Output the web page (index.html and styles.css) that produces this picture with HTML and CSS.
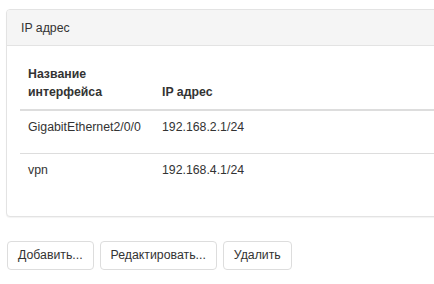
FILE: index.html
```html
<!DOCTYPE html>
<html lang="ru">
<head>
    <meta charset="UTF-8">
    <title>IP адрес</title>
    <link rel="stylesheet" href="styles.css">
</head>
<body>
    <div class="pagina">
        <div class="painel">
            <div class="painel-titulo">IP адрес</div>
            <div class="painel-corpo">
                <table class="tabela">
                    <thead>
                        <tr>
                            <th class="col-nome">Название<br>интерфейса</th>
                            <th>IP адрес</th>
                        </tr>
                    </thead>
                    <tbody>
                        <tr>
                            <td>GigabitEthernet2/0/0</td>
                            <td>192.168.2.1/24</td>
                        </tr>
                        <tr>
                            <td>vpn</td>
                            <td>192.168.4.1/24</td>
                        </tr>
                    </tbody>
                </table>
            </div>
        </div>

        <div class="botoes">
            <button class="botao">Добавить...</button>
            <button class="botao">Редактировать...</button>
            <button class="botao">Удалить</button>
        </div>
    </div>
</body>
</html>
```

FILE: styles.css
```css
* {
    box-sizing: border-box;
}

body {
    margin: 0;
    overflow: hidden;
    font-family: "Liberation Sans", Arial, sans-serif;
    font-size: 12.3px;
    line-height: 18px;
    color: #333;
    background: #fff;
}

.pagina {
    padding: 9px 0 0 6px;
}

.painel {
    width: 640px;
    border: 1px solid #e3e3e3;
    border-radius: 4px;
    box-shadow: 0 1px 1px rgba(0, 0, 0, .05);
    background: #fff;
}

.painel-titulo {
    background-color: #f5f5f5;
    border-bottom: 1px solid #e3e3e3;
    border-radius: 3px 3px 0 0;
    padding: 9px 14px 8px;
}

.painel-corpo {
    padding: 11px 13px 0;
}

.tabela {
    width: 100%;
    border-collapse: collapse;
    margin-bottom: 20px;
}

.tabela th {
    text-align: left;
    font-weight: bold;
    vertical-align: bottom;
    padding: 8px;
    border-bottom: 2px solid #ddd;
}

.tabela .col-nome {
    width: 134px;
}

.tabela td {
    vertical-align: top;
    padding: 7px 8px 17px;
    border-top: 1px solid #ddd;
}

.tabela tbody tr:first-child td {
    border-top: 0;
}

.botoes {
    display: flex;
    gap: 6px;
    margin-top: 24px;
    padding-left: 1px;
}

.botao {
    font-family: inherit;
    font-size: 12.3px;
    line-height: 18px;
    color: #333;
    background: #fff;
    border: 1px solid #ddd;
    border-radius: 4px;
    padding: 4px 10px 5px;
}
```
